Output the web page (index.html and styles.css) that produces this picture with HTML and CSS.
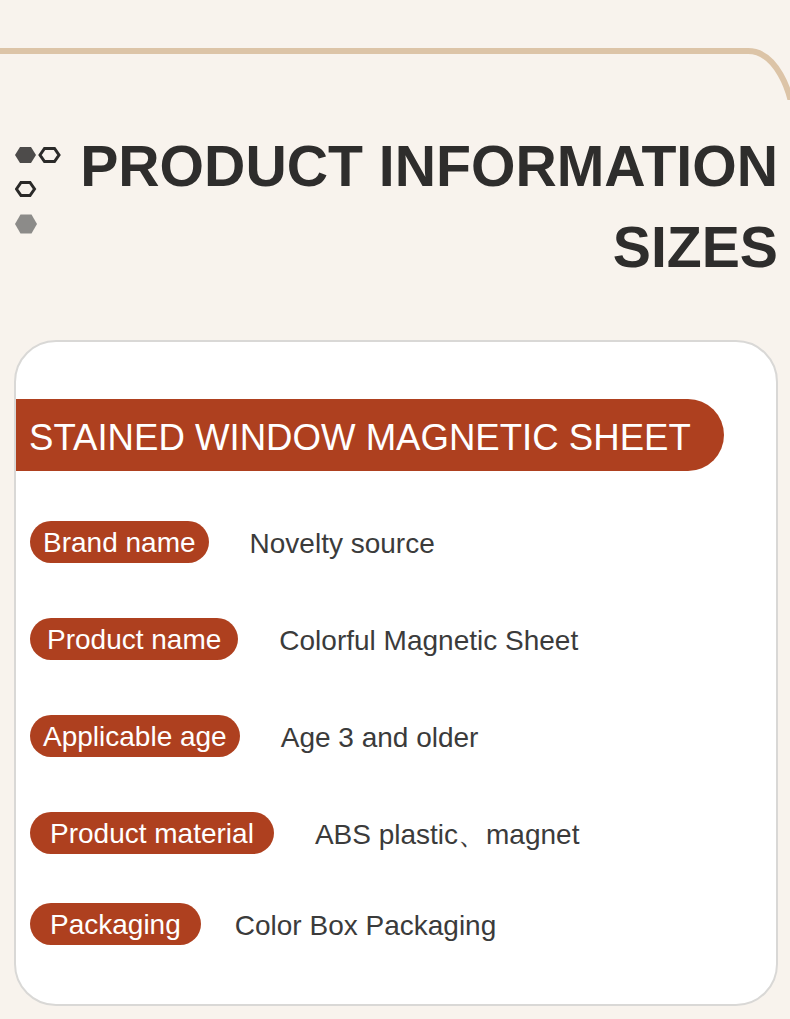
FILE: index.html
```html
<!DOCTYPE html>
<html lang="en">
<head>
<meta charset="utf-8">
<title>Product Information</title>
<link rel="stylesheet" href="styles.css">
</head>
<body>
<div class="page">
  <svg class="deco-line" width="790" height="100" viewBox="0 0 790 100" aria-hidden="true">
    <path d="M0 51 H748 A46 80 0 0 1 794 131" fill="none" stroke="#dcc4a7" stroke-width="6"/>
  </svg>

  <header class="header">
    <svg class="hexes" width="46" height="90" viewBox="0 0 46 90" aria-hidden="true">
      <polygon points="0,10 5,2 16,2 21,10 16,18 5,18" fill="#4d4b4a"/>
      <polygon points="25,10 29.5,3.5 39.5,3.5 44,10 39.5,16.5 29.5,16.5" fill="none" stroke="#2b2a29" stroke-width="3"/>
      <polygon points="1.5,44 6,37.5 15,37.5 19.5,44 15,50.5 6,50.5" fill="none" stroke="#2b2a29" stroke-width="3"/>
      <polygon points="0,79 5.5,69.5 16.5,69.5 22,79 16.5,88.5 5.5,88.5" fill="#8c8b89"/>
    </svg>
    <h1 class="title">PRODUCT INFORMATION<br>SIZES</h1>
  </header>

  <section class="card">
    <h2 class="banner">STAINED WINDOW MAGNETIC SHEET</h2>
    <div class="rows">
      <div class="row"><span class="pill">Brand name</span><span class="value">Novelty source</span></div>
      <div class="row"><span class="pill pill-mid">Product name</span><span class="value">Colorful Magnetic Sheet</span></div>
      <div class="row"><span class="pill">Applicable age</span><span class="value">Age 3 and older</span></div>
      <div class="row"><span class="pill pill-wide">Product material</span><span class="value">ABS plastic、magnet</span></div>
      <div class="row row-last"><span class="pill pill-wide">Packaging</span><span class="value">Color Box Packaging</span></div>
    </div>
  </section>
</div>
</body>
</html>
```

FILE: styles.css
```css
* {
  box-sizing: border-box;
}

html, body {
  margin: 0;
  padding: 0;
}

body {
  background: #f8f3ed;
  font-family: "Liberation Sans", Arial, sans-serif;
  overflow: hidden;
}

.page {
  width: 790px;
  min-height: 1019px;
}

.deco-line {
  display: block;
}

.header {
  display: flex;
  align-items: flex-start;
  margin-top: 26px;
  padding-left: 15px;
  padding-right: 12px;
}

.hexes {
  display: block;
  flex: none;
  margin-top: 19px;
}

.title {
  flex: 1;
  margin: 0;
  text-align: right;
  font-size: 57.2px;
  line-height: 81px;
  font-weight: 700;
  color: #2e2d2c;
}

.card {
  margin: 52px 12px 0 14px;
  height: 666px;
  background: #ffffff;
  border: 2px solid #d9d8d6;
  border-radius: 42px;
  padding-top: 57px;
  overflow: hidden;
}

.banner {
  margin: 0;
  width: 708px;
  height: 72px;
  padding: 6px 0 0 13px;
  line-height: 66px;
  font-size: 36.6px;
  font-weight: 400;
  color: #ffffff;
  background: #ae401f;
  border-radius: 0 36px 36px 0;
  white-space: nowrap;
}

.rows {
  display: flex;
  flex-direction: column;
  gap: 55px;
  margin-top: 50px;
  padding-left: 14px;
}

.row {
  display: flex;
  align-items: center;
  gap: 41px;
}

.row-last {
  margin-top: -6px;
  gap: 34px;
}

.pill {
  height: 42px;
  padding: 1px 13px 0;
  line-height: 41px;
  font-size: 28px;
  color: #ffffff;
  background: #ae401f;
  border-radius: 21px;
  white-space: nowrap;
}

.pill-mid {
  padding: 1px 17px 0;
}

.pill-wide {
  padding: 1px 20px 0;
}

.value {
  padding-top: 4px;
  font-size: 28px;
  color: #3b3b3b;
  white-space: nowrap;
}
```
